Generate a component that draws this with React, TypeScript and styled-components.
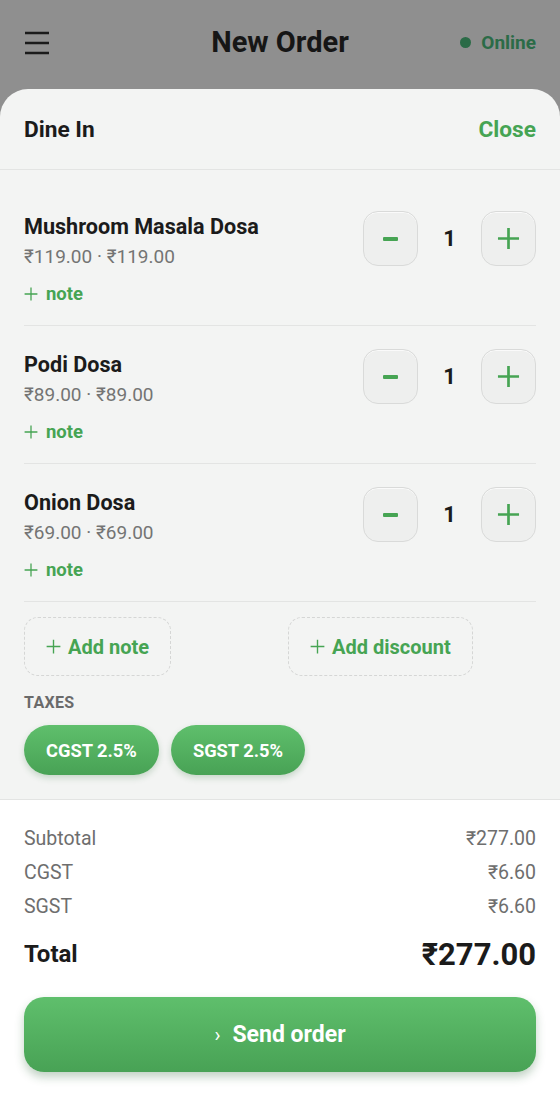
import React from 'react';
import styled, { createGlobalStyle } from 'styled-components';

const palette = {
  green: '#46a453',
  greenTop: '#5fbf6c',
  greenBottom: '#48a255',
  ink: '#1b1b1b',
  gray: '#747474',
  line: '#e3e4e3',
  sheet: '#f3f4f3',
  overlay: '#8f8f8f',
};

const GlobalStyle = createGlobalStyle`
  html, body {
    margin: 0;
    padding: 0;
    background: ${palette.overlay};
  }
  body {
    font-family: Roboto, 'Noto Sans', 'DejaVu Sans', sans-serif;
    color: ${palette.ink};
    -webkit-font-smoothing: antialiased;
  }
  * {
    box-sizing: border-box;
  }
`;

const Screen = styled.div`
  width: 560px;
  min-height: 100vh;
  display: flex;
  flex-direction: column;
  background: ${palette.overlay};
`;

const TopBar = styled.header`
  height: 89px;
  padding: 0 24px 5px;
  display: grid;
  grid-template-columns: 1fr auto 1fr;
  align-items: center;
  .title {
    font-size: 29px;
    font-weight: 700;
    color: #161616;
  }
  .status {
    justify-self: end;
    display: flex;
    align-items: center;
    gap: 10px;
    font-size: 19px;
    font-weight: 700;
    color: #2b6b47;
    &::before {
      content: '';
      width: 11px;
      height: 11px;
      border-radius: 50%;
      background: #2b6b47;
    }
  }
`;

const Sheet = styled.main`
  flex: 1;
  display: flex;
  flex-direction: column;
  background: ${palette.sheet};
  border-radius: 28px 28px 0 0;
  overflow: hidden;
`;

const SheetHead = styled.div`
  height: 81px;
  padding: 0 24px;
  display: flex;
  align-items: center;
  justify-content: space-between;
  border-bottom: 1px solid ${palette.line};
  font-size: 22.7px;
  font-weight: 700;
  .close {
    color: ${palette.green};
  }
`;

const ItemList = styled.div`
  padding: 18px 24px 0;
`;

const ItemRow = styled.div`
  display: flex;
  justify-content: space-between;
  align-items: flex-start;
  padding: 23px 0 18px;
  border-bottom: 1px solid ${palette.line};
`;

const ItemInfo = styled.div`
  .name {
    margin-top: 3px;
    font-size: 21.6px;
    line-height: 26px;
    font-weight: 700;
  }
  .price {
    margin-top: 4px;
    font-size: 19px;
    line-height: 26px;
    color: ${palette.gray};
  }
`;

const NoteLink = styled.div`
  margin-top: 11px;
  display: flex;
  align-items: center;
  gap: 8px;
  font-size: 18.5px;
  line-height: 26px;
  font-weight: 700;
  color: ${palette.green};
`;

const Stepper = styled.div`
  display: flex;
  align-items: center;
  .count {
    width: 63px;
    text-align: center;
    font-size: 22px;
    font-weight: 700;
  }
`;

const StepButton = styled.button`
  width: 55px;
  height: 55px;
  padding: 0;
  display: flex;
  align-items: center;
  justify-content: center;
  border: 1px solid #d9dad9;
  border-radius: 15px;
  background: #eeefee;
  box-shadow: inset 0 1px 0 rgba(255, 255, 255, 0.7);
`;

const Extras = styled.section`
  padding: 15px 24px 24px;
  border-bottom: 1px solid ${palette.line};
`;

const ActionGrid = styled.div`
  display: grid;
  grid-template-columns: 1fr 1fr;
  column-gap: 16px;
  justify-items: start;
`;

const DashedButton = styled.button`
  height: 59px;
  padding: 0 21px;
  display: flex;
  align-items: center;
  gap: 7px;
  border: 1.5px dashed #d5d6d5;
  border-radius: 14px;
  background: transparent;
  font-family: inherit;
  font-size: 20px;
  font-weight: 700;
  color: ${palette.green};
`;

const SectionLabel = styled.div`
  margin-top: 17px;
  font-size: 16px;
  line-height: 20px;
  font-weight: 700;
  letter-spacing: 0.3px;
  color: #6a6a6a;
`;

const ChipRow = styled.div`
  margin-top: 12px;
  display: flex;
  gap: 12px;
`;

const Chip = styled.span`
  height: 50px;
  padding: 0 22px;
  display: inline-flex;
  align-items: center;
  border-radius: 25px;
  background: linear-gradient(180deg, ${palette.greenTop}, ${palette.greenBottom});
  box-shadow: 0 3px 6px rgba(40, 110, 50, 0.22);
  font-size: 18.3px;
  font-weight: 700;
  color: #fff;
`;

const Summary = styled.section`
  flex: 1;
  background: #fff;
  padding: 21px 24px 24px;
`;

const SumRow = styled.div<{ total?: boolean }>`
  display: flex;
  justify-content: space-between;
  align-items: center;
  height: ${p => (p.total ? '40px' : '34px')};
  margin-top: ${p => (p.total ? '11px' : '0')};
  font-size: ${p => (p.total ? '24px' : '19.5px')};
  font-weight: ${p => (p.total ? 700 : 400)};
  color: ${p => (p.total ? palette.ink : '#6e6e6e')};
  .amount {
    font-size: ${p => (p.total ? '31px' : '19.5px')};
  }
`;

const SendButton = styled.button`
  width: 100%;
  height: 75px;
  margin-top: 23px;
  display: flex;
  align-items: center;
  justify-content: center;
  gap: 12px;
  border: none;
  border-radius: 20px;
  background: linear-gradient(180deg, ${palette.greenTop}, ${palette.greenBottom});
  box-shadow: 0 5px 10px rgba(30, 90, 40, 0.28);
  font-family: inherit;
  font-size: 23px;
  font-weight: 700;
  color: #fff;
  .chev {
    font-size: 20px;
    font-weight: 400;
  }
`;

const MenuIcon = () => (
  <svg width="26" height="26" viewBox="0 0 26 26" fill="none">
    <path d="M1 4h24M1 14h24M1 24h24" stroke="#1b1b1b" strokeWidth="2.6" />
  </svg>
);

const PlusIcon: React.FC<{ size: number; weight?: number }> = ({ size, weight = 2 }) => (
  <svg width={size} height={size} viewBox="0 0 24 24" fill="none">
    <path d="M12 1v22M1 12h22" stroke={palette.green} strokeWidth={weight} />
  </svg>
);

const MinusIcon = () => (
  <svg width="15" height="4" viewBox="0 0 15 4">
    <rect width="15" height="4" rx="1" fill={palette.green} />
  </svg>
);

interface OrderItem {
  name: string;
  price: string;
  qty: number;
}

const items: OrderItem[] = [
  { name: 'Mushroom Masala Dosa', price: '₹119.00', qty: 1 },
  { name: 'Podi Dosa', price: '₹89.00', qty: 1 },
  { name: 'Onion Dosa', price: '₹69.00', qty: 1 },
];

const ItemLine: React.FC<{ item: OrderItem }> = ({ item }) => (
  <ItemRow>
    <ItemInfo>
      <div className="name">{item.name}</div>
      <div className="price">
        {item.price} · {item.price}
      </div>
      <NoteLink>
        <PlusIcon size={14} weight={2.2} />
        note
      </NoteLink>
    </ItemInfo>
    <Stepper>
      <StepButton>
        <MinusIcon />
      </StepButton>
      <span className="count">{item.qty}</span>
      <StepButton>
        <PlusIcon size={23} weight={2.8} />
      </StepButton>
    </Stepper>
  </ItemRow>
);

const App: React.FC = () => (
  <>
    <GlobalStyle />
    <Screen>
      <TopBar>
        <MenuIcon />
        <span className="title">New Order</span>
        <span className="status">Online</span>
      </TopBar>
      <Sheet>
        <SheetHead>
          <span>Dine In</span>
          <span className="close">Close</span>
        </SheetHead>
        <ItemList>
          {items.map(item => (
            <ItemLine key={item.name} item={item} />
          ))}
        </ItemList>
        <Extras>
          <ActionGrid>
            <DashedButton>
              <PlusIcon size={15} weight={2.2} />
              Add note
            </DashedButton>
            <DashedButton>
              <PlusIcon size={15} weight={2.2} />
              Add discount
            </DashedButton>
          </ActionGrid>
          <SectionLabel>TAXES</SectionLabel>
          <ChipRow>
            <Chip>CGST 2.5%</Chip>
            <Chip>SGST 2.5%</Chip>
          </ChipRow>
        </Extras>
        <Summary>
          <SumRow>
            <span>Subtotal</span>
            <span className="amount">₹277.00</span>
          </SumRow>
          <SumRow>
            <span>CGST</span>
            <span className="amount">₹6.60</span>
          </SumRow>
          <SumRow>
            <span>SGST</span>
            <span className="amount">₹6.60</span>
          </SumRow>
          <SumRow total>
            <span>Total</span>
            <span className="amount">₹277.00</span>
          </SumRow>
          <SendButton>
            <span className="chev">›</span>
            Send order
          </SendButton>
        </Summary>
      </Sheet>
    </Screen>
  </>
);

export default App;
